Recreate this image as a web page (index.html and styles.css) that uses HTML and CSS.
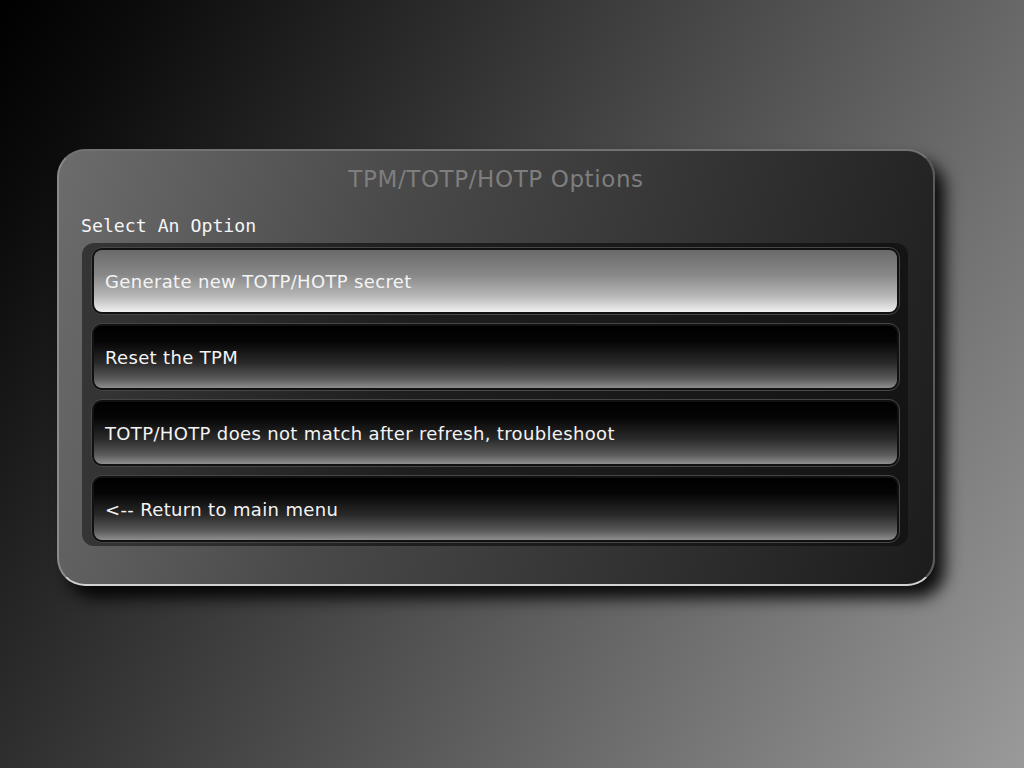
FILE: index.html
```html
<!DOCTYPE html>
<html>
<head>
<meta charset="utf-8">
<link rel="stylesheet" href="styles.css">
</head>
<body>
<div class="screen">
  <div class="panel">
    <div class="title">TPM/TOTP/HOTP Options</div>
    <div class="label">Select An Option</div>
    <div class="list">
      <div class="item selected"><div class="face">Generate new TOTP/HOTP secret</div></div>
      <div class="item"><div class="face">Reset the TPM</div></div>
      <div class="item"><div class="face">TOTP/HOTP does not match after refresh, troubleshoot</div></div>
      <div class="item"><div class="face">&lt;-- Return to main menu</div></div>
    </div>
  </div>
</div>
</body>
</html>
```
FILE: styles.css
```css
html, body {
  margin: 0;
  padding: 0;
  width: 1024px;
  height: 768px;
  overflow: hidden;
}
.screen {
  width: 1024px;
  height: 768px;
  background: linear-gradient(122deg, #000 0%, #0c0c0c 10%, #9a9a9a 100%);
  padding-top: 149px;
  padding-left: 57px;
  box-sizing: border-box;
}
.panel {
  width: 878px;
  height: 437px;
  box-sizing: border-box;
  border-radius: 28px;
  border: 2px solid;
  border-color: #727272 #5a5a5a #d2d2d2 #8a8a8a;
  background: linear-gradient(105deg, #6c6c6c 0%, #4a4a4a 35%, #1c1c1c 100%);
  box-shadow: 10px 12px 16px rgba(0, 0, 0, 0.9);
  padding: 13px 25px 0 23px;
}
.title {
  text-align: center;
  font-family: "DejaVu Sans", sans-serif;
  font-size: 23px;
  letter-spacing: 0.6px;
  line-height: 30px;
  color: #7e7e7e;
  padding-left: 2px;
}
.label {
  margin-top: 21px;
  font-family: "DejaVu Sans Mono", monospace;
  font-size: 18.2px;
  line-height: 22px;
  color: #f6f6f6;
  margin-left: -1px;
}
.list {
  margin-top: 6px;
  border-radius: 12px;
  background: linear-gradient(90deg, #353535 0%, #1e1e1e 40%, #141414 100%);
  padding: 4px 8px 3px 9px;
  display: flex;
  flex-direction: column;
  gap: 8px;
}
.item {
  height: 68px;
  box-sizing: border-box;
  border: 1px solid #464646;
  border-radius: 11px;
  background: #111;
  padding: 2px;
}
.face {
  height: 100%;
  box-sizing: border-box;
  border-radius: 8px;
  background: linear-gradient(180deg, #000 0%, #050505 25%, #2a2a2a 60%, #5a5a5a 85%, #8e8e8e 100%);
  display: flex;
  align-items: center;
  padding-left: 11px;
  font-family: "DejaVu Sans", sans-serif;
  font-size: 18px;
  letter-spacing: 0.35px;
  color: #f4f4f4;
}
.selected .face {
  background: linear-gradient(180deg, #6a6a6a 0%, #888 40%, #b8b8b8 75%, #f0f0f0 100%);
}
```
